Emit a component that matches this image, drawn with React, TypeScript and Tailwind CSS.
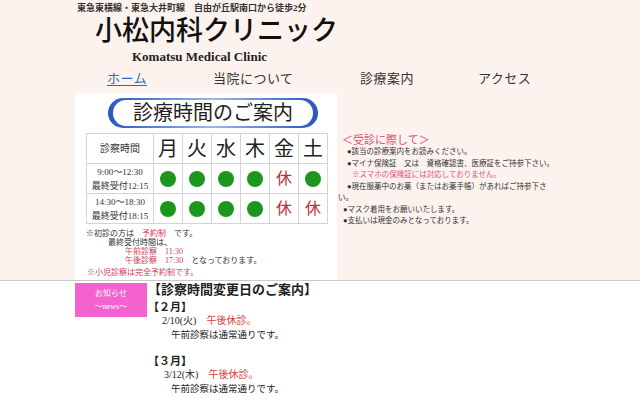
const serif = "font-['Liberation_Serif','Noto_Sans_CJK_JP',serif]";

const days = ["月", "火", "水", "木", "金", "土"];

type Cell = "open" | "closed";

const rows: { time: string; last: string; cells: Cell[] }[] = [
  {
    time: "9:00～12:30",
    last: "最終受付12:15",
    cells: ["open", "open", "open", "open", "closed", "open"],
  },
  {
    time: "14:30～18:30",
    last: "最終受付18:15",
    cells: ["open", "open", "open", "open", "closed", "closed"],
  },
];

function Dot() {
  return <span className="block w-[16px] h-[16px] rounded-full bg-[#1c961c]" />;
}

function Schedule() {
  return (
    <div className="ml-[75px] w-[262px] h-[187px] bg-white flex flex-col">
      {/* PILL TITLE */}
      <div className="mt-[5px] ml-[33px] w-[210px] h-[30px] rounded-full bg-gradient-to-r from-[#2a55c0] via-[#9ab6ea] to-[#2a55c0] px-[5px] py-[2px]">
        <div className="h-full rounded-full bg-white flex items-center justify-center text-[20px] leading-none text-[#222]">
          診療時間のご案内
        </div>
      </div>

      {/* TABLE */}
      <table className="mt-[5px] ml-[11px] w-[241px] border-collapse table-fixed">
        <colgroup>
          <col className="w-[67px]" />
          {days.map((d) => (
            <col key={d} className="w-[29px]" />
          ))}
        </colgroup>
        <thead>
          <tr className="h-[30px]">
            <th className="border border-[#d4d4d4] text-[10px] font-normal text-[#333]">
              診察時間
            </th>
            {days.map((d) => (
              <th
                key={d}
                className="border border-[#d4d4d4] text-[20px] font-normal text-[#222] leading-none"
              >
                {d}
              </th>
            ))}
          </tr>
        </thead>
        <tbody>
          {rows.map((r) => (
            <tr key={r.time} className="h-[30px]">
              <td className="border border-[#d4d4d4] text-[9px] leading-[14px] text-[#333] text-center">
                <div>{r.time}</div>
                <div>{r.last}</div>
              </td>
              {r.cells.map((c, i) => (
                <td key={i} className="border border-[#d4d4d4] text-center">
                  {c === "open" ? (
                    <div className="flex justify-center">
                      <Dot />
                    </div>
                  ) : (
                    <span className="text-[16px] leading-none text-[#c0303a]">
                      休
                    </span>
                  )}
                </td>
              ))}
            </tr>
          ))}
        </tbody>
      </table>

      {/* NOTES */}
      <div className="mt-[5px] ml-[11px] text-[8px] leading-[9px] text-[#333]">
        <div>
          ※初診の方は　<span className="text-[#d03a5a]">予約制</span>　です。
        </div>
        <div className="pl-[22px]">最終受付時間は、</div>
        <div className="pl-[39px] text-[#d03a5a]">午前診察　11:30</div>
        <div className="pl-[39px]">
          <span className="text-[#d03a5a]">午後診察　17:30</span>　となっております。
        </div>
        <div className="mt-[3px] pl-[1px] text-[#d03a5a]">※小児診察は完全予約制です。</div>
      </div>
    </div>
  );
}

function Notice() {
  return (
    <div className="ml-[1px] mt-[41px] text-[7.5px] leading-[11.5px] text-[#333]">
      <div className="pl-[4px] text-[11px] leading-[12px] text-[#e0507a]">
        ＜受診に際して＞
      </div>
      <div className="pl-[9px]">●該当の診療案内をお読みください。</div>
      <div className="pl-[9px]">●マイナ保険証　又は　資格確認書、医療証をご持参下さい。</div>
      <div className="pl-[14px] text-[#e0507a]">※スマホの保険証には対応しておりません。</div>
      <div className="pl-[9px]">●現在服薬中のお薬（またはお薬手帳）があればご持参下さ</div>
      <div>い。</div>
      <div className="pl-[5px]">●マスク着用をお願いいたします。</div>
      <div className="pl-[5px]">●支払いは現金のみとなっております。</div>
    </div>
  );
}

function News() {
  return (
    <div className="flex">
      <div className="ml-[75px] mt-[2px] w-[72px] h-[34px] bg-[#f462d0] text-white text-[8px] leading-[13px] flex flex-col items-center justify-center">
        <div>お知らせ</div>
        <div>～news～</div>
      </div>
      <div className="ml-[1px] mt-[1px] text-[#222]">
        <div className="text-[13px] leading-[16px] font-bold">【診察時間変更日のご案内】</div>
        <div className="mt-[2px] text-[11px] leading-[14px] font-bold">【２月】</div>
        <div className="pl-[14px] text-[10px] leading-[14px]">
          2/10(火)　<span className="text-[#e03c3c]">午後休診。</span>
        </div>
        <div className="pl-[23px] text-[9.5px] leading-[14px]">午前診察は通常通りです。</div>
        <div className="h-[12px]" />
        <div className="text-[11px] leading-[14px] font-bold">【３月】</div>
        <div className="pl-[16px] text-[10px] leading-[14px]">
          3/12(木)　<span className="text-[#e03c3c]">午後休診。</span>
        </div>
        <div className="pl-[23px] text-[9.5px] leading-[14px]">午前診察は通常通りです。</div>
      </div>
    </div>
  );
}

export default function App() {
  return (
    <div className={`min-h-screen bg-white ${serif}`}>
      {/* HEADER */}
      <header className="bg-[#fdf3ee] border-b border-[#c8c8c8]">
        <div className="pt-[2px] pl-[77px] text-[9px] leading-[12px] font-bold text-[#333]">
          東急東横線・東急大井町線　自由が丘駅南口から徒歩2分
        </div>
        <h1 className="mt-[3px] pl-[95px] text-[27px] leading-[28px] font-medium text-[#111]">
          小松内科クリニック
        </h1>
        <div className="mt-[5px] pl-[132px] text-[13px] leading-[14px] font-bold text-[#222]">
          Komatsu Medical Clinic
        </div>

        {/* NAV */}
        <nav className="mt-[6px] pl-[107px] flex text-[13px] leading-[18px] tracking-[0.5px] text-[#333]">
          <a className="w-[106px] text-[#2a6ebb] underline underline-offset-2" href="#">
            ホーム
          </a>
          <span className="w-[147px]">当院について</span>
          <span className="w-[118px]">診療案内</span>
          <span>アクセス</span>
        </nav>

        <div className="mt-[5px] flex">
          <Schedule />
          <Notice />
        </div>
      </header>

      <News />
    </div>
  );
}
